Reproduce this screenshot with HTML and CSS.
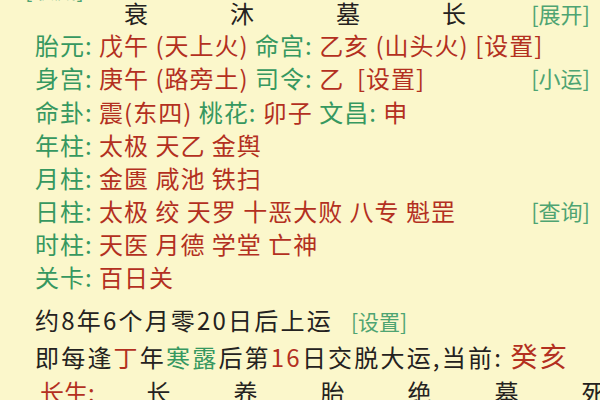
FILE: index.html
```html
<!DOCTYPE html>
<html lang="zh">
<head>
<meta charset="utf-8">
<link rel="stylesheet" href="styles.css">
</head>
<body>
<div class="page">
  <div class="row top-fav"><span class="btn">[收藏]</span></div>
  <div class="row stages">
    <span class="cell">衰</span><span class="cell">沐</span><span class="cell">墓</span><span class="cell">长</span>
    <span class="btn right">[展开]</span>
  </div>
  <div class="row r1"><span class="g">胎元:</span> <span class="r">戊午 (天上火)</span> <span class="g">命宫:</span> <span class="r">乙亥 (山头火)</span> <span class="r">[设置]</span></div>
  <div class="row r2 split"><span><span class="g">身宫:</span> <span class="r">庚午 (路旁土)</span> <span class="g">司令:</span> <span class="r">乙 &nbsp;[设置]</span></span><span class="btn">[小运]</span></div>
  <div class="row r3"><span class="g">命卦:</span> <span class="r">震(东四)</span> <span class="g">桃花:</span> <span class="r">卯子</span> <span class="g">文昌:</span> <span class="r">申</span></div>
  <div class="row r4"><span class="g">年柱:</span> <span class="r">太极 天乙 金舆</span></div>
  <div class="row r5"><span class="g">月柱:</span> <span class="r">金匮 咸池 铁扫</span></div>
  <div class="row r6 split"><span><span class="g">日柱:</span> <span class="r">太极 绞 天罗 十恶大败 八专 魁罡</span></span><span class="btn">[查询]</span></div>
  <div class="row r7"><span class="g">时柱:</span> <span class="r">天医 月德 学堂 亡神</span></div>
  <div class="row r8"><span class="g">关卡:</span> <span class="r">百日关</span></div>
  <div class="row r9 d">约8年6个月零20日后上运<span class="btn small">[设置]</span></div>
  <div class="row r10 d">即每逢<span class="r">丁</span>年<span class="g">寒露</span>后第<span class="r">16</span>日交脱大运,当前: <span class="r big">癸亥</span></div>
  <div class="row life">
    <span class="r lab">长生:</span>
    <span class="lc">长</span><span class="lc">养</span><span class="lc">胎</span><span class="lc">绝</span><span class="lc">墓</span><span class="lc">死</span>
  </div>
</div>
</body>
</html>
```
FILE: styles.css
```css
html, body {
  margin: 0;
  padding: 0;
  background: #fbf7cb;
}
body {
  width: 600px;
  height: 400px;
  overflow: hidden;
  font-family: "Noto Sans CJK SC", "Noto Sans", sans-serif;
  font-size: 24px;
  font-weight: 400;
  color: #242220;
}
.page {
  display: flex;
  flex-direction: column;
  padding: 0 10px 0 35px;
}
.row {
  height: 33px;
  line-height: 33px;
  white-space: nowrap;
  letter-spacing: 1px;
}
.g { color: #369860; }
.r { color: #b3301f; }
.btn { color: #4ea472; font-size: 22px; letter-spacing: 0; }
.btn.small { font-size: 21px; margin-left: 18px; }
.big { font-size: 27px; }
.top-fav {
  margin-top: -22px;
  margin-left: -10px;
  height: 20px;
  line-height: 20px;
}
.stages {
  display: grid;
  grid-template-columns: 48px repeat(4, 106px) 1fr;
  height: 30px;
  line-height: 30px;
  letter-spacing: 0;
}
.stages .cell { text-align: center; }
.stages .cell:first-child { grid-column: 2; }
.stages .right { text-align: right; }
.split {
  display: flex;
  justify-content: space-between;
}
.r1 { margin-top: 2px; height: 30px; line-height: 30px; }
.r2 { height: 35px; line-height: 35px; }
.r9 { margin-top: 9px; height: 36px; line-height: 36px; letter-spacing: 2.2px; }
.r10 { height: 36px; line-height: 36px; letter-spacing: 2.2px; }
.life {
  display: grid;
  grid-template-columns: 75px repeat(6, 87px);
  margin-left: 5px;
  height: 36px;
  line-height: 36px;
  letter-spacing: 0;
}
.life .lc { text-align: center; }
```
